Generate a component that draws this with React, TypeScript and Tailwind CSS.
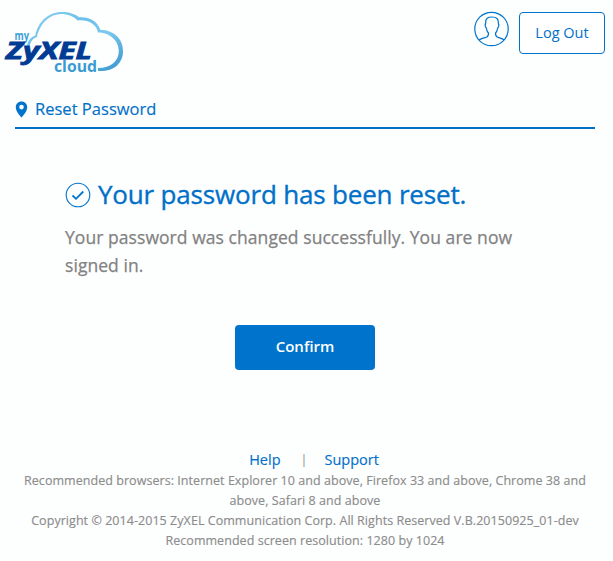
function Logo() {
  return (
    <svg width="124" height="78" viewBox="0 0 124 78" role="img" aria-label="myZyXEL cloud">
      <defs>
        <linearGradient id="cloud" x1="0" y1="0" x2="1" y2="1">
          <stop offset="0" stopColor="#8ed0f2" />
          <stop offset="0.35" stopColor="#6cc0ea" />
          <stop offset="0.6" stopColor="#7cc8ef" />
          <stop offset="1" stopColor="#3594cc" />
        </linearGradient>
      </defs>
      <path
        fill="url(#cloud)"
        d="M27 46C28 40 31 37 35.300 35.500C38 22 48 12 62 12C69 12 75 14 79 17.300C88 16.500 97 20 100.500 30C113 30 123 38 123 51C123 64 113 72 98 71V68C111 68 118.800 61 118.800 51C118.800 40 109 32.500 98 32.500C96.500 24 88 19.500 77.500 20.500C74 16.500 68 14 61 14C48 14.500 39.500 25 37 37C33 38 31 41 29.500 46Z"
      />
      <text x="14.500" y="39.500" fontSize="12" fontWeight="700" textLength="14.500" lengthAdjust="spacingAndGlyphs" fill="#3ba0d8" className="font-['Open_Sans',sans-serif]">my</text>
      <text x="6" y="59" fontSize="23.500" fontWeight="700" fontStyle="italic" textLength="86" lengthAdjust="spacingAndGlyphs" fill="#003c94" stroke="#003c94" strokeWidth="0.900" className="font-['Open_Sans',sans-serif]">ZyXEL</text>
      <text x="54" y="71.500" fontSize="16" fontWeight="700" textLength="43" lengthAdjust="spacingAndGlyphs" fill="#3a9bd3" className="font-['Open_Sans',sans-serif]">cloud</text>
    </svg>
  );
}

function UserIcon() {
  return (
    <svg width="36" height="36" viewBox="0 0 36 36" fill="none" stroke="#0074cc" strokeWidth="1.200">
      <circle cx="17.500" cy="18" r="16.700" />
      <path d="M5 29C7.500 27.200 10.500 27 12.800 26C14.500 25.300 14.500 24 14.500 22C12.900 20.500 12.600 18.500 12.300 17C11 15.500 11 13.500 11.700 12C11.200 7.500 14 6 18 6C22.500 6 24.800 8 24.300 12C25 13.500 25 15.500 23.700 17C23.400 18.500 23.100 20.500 21.500 22C21.500 24 21.500 25.300 23.200 26C25.500 27 28 27.200 30.200 29" />
    </svg>
  );
}

export default function App() {
  return (
    <div className="h-[561px] w-[613px] overflow-hidden bg-[#fdfefe] font-['Open_Sans',sans-serif] text-[#0070c9]">
      <header className="flex h-[92px] items-start justify-between pr-2">
        <Logo />
        <div className="flex gap-[9px] pt-[12px]">
          <div className="-mt-px">
            <UserIcon />
          </div>
          <button className="h-[42px] w-[86px] rounded-[4px] border border-[#0074cc] bg-white text-[14.500px]">Log Out</button>
        </div>
      </header>

      <div className="mr-[18px] ml-[15px] flex h-[37px] items-center gap-[7px] border-b-2 border-[#0070c0]">
        <svg width="13" height="17" viewBox="0 0 13 17" fill="#0074cc">
          <path fillRule="evenodd" d="M6.500 0.500C3 0.500 0.800 3 0.800 6.200C0.800 10 4 13.500 6.500 16.500C9 13.500 12.200 10 12.200 6.200C12.200 3 10 0.500 6.500 0.500ZM6.500 3.800A2.300 2.300 0 1 1 6.500 8.400A2.300 2.300 0 1 1 6.500 3.800Z" />
        </svg>
        <h1 className="pb-px text-[16.500px] leading-[24px] tracking-[0.020px] [-webkit-text-stroke:0.150px]">Reset Password</h1>
      </div>

      <main className="px-[65px] pt-[46px]">
        <div className="flex h-10 items-center gap-[7px]">
          <svg width="26" height="26" viewBox="0 0 26 26" fill="none" stroke="#0074cc">
            <circle cx="13" cy="13" r="11.800" strokeWidth="1.100" />
            <path d="M7.500 13.500L11 16.800L18.300 9.500" strokeWidth="1.800" />
          </svg>
          <h2 className="pb-[2px] text-[26px] tracking-[-0.180px] whitespace-nowrap [-webkit-text-stroke:0.350px]">Your password has been reset.</h2>
        </div>
        <p className="mt-[8px] text-[17.500px] leading-[28px] tracking-[0.060px] text-[#828282] [-webkit-text-stroke:0.250px]">
          Your password was changed successfully. You are now
          <br />
          signed in.
        </p>
        <button className="mt-[46px] ml-[170px] block h-[45px] w-[140px] rounded-[4px] bg-[#0074cc] pb-[2px] text-[15px] font-semibold text-white">Confirm</button>
      </main>

      <footer className="pt-[79px] pr-[3px] text-center text-[12.500px] leading-[20px] tracking-[0.050px] text-[#8c8c8c]">
        <div className="mb-px flex h-[21px] items-center justify-center pl-[18px]">
          <a className="text-[14.500px] tracking-normal text-[#0070c9] [-webkit-text-stroke:0.150px]">Help</a>
          <span className="mr-[17px] ml-[20px]">|</span>
          <a className="text-[14.500px] tracking-normal text-[#0070c9] [-webkit-text-stroke:0.150px]">Support</a>
        </div>
        <div className="[-webkit-text-stroke:0.150px]">
          <p>Recommended browsers: Internet Explorer 10 and above, Firefox 33 and above, Chrome 38 and</p>
          <p>above, Safari 8 and above</p>
          <p>Copyright © 2014-2015 ZyXEL Communication Corp. All Rights Reserved V.B.20150925_01-dev</p>
          <p>Recommended screen resolution: 1280 by 1024</p>
        </div>
      </footer>
    </div>
  );
}
